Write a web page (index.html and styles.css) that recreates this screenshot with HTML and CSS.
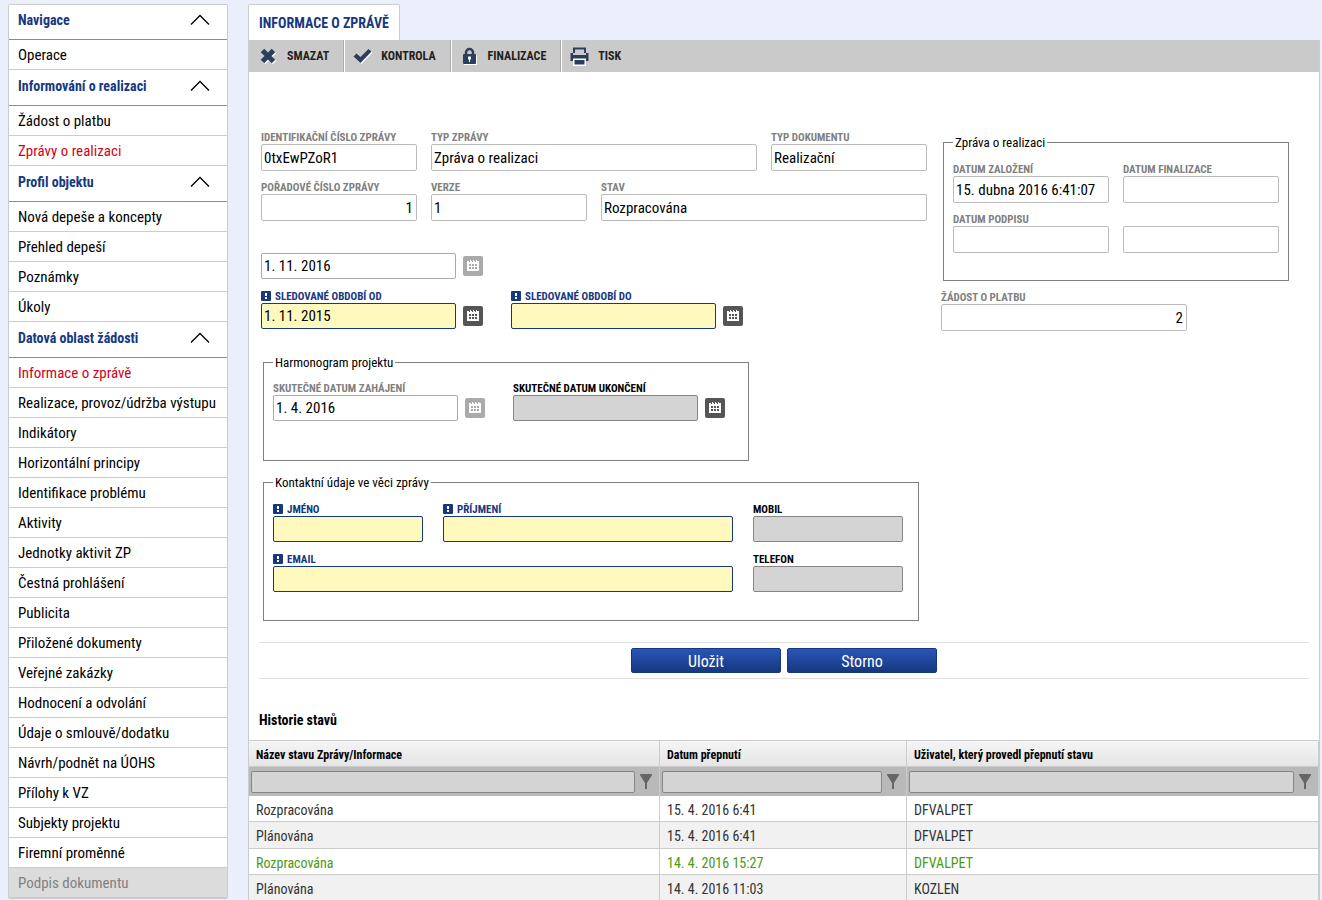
FILE: index.html
```html
<!DOCTYPE html>
<html lang="cs">
<head>
<meta charset="utf-8">
<title>Informace o zprávě</title>
<link rel="stylesheet" href="styles.css">
</head>
<body>
<svg class="sprite" aria-hidden="true">
  <symbol id="chevron" viewBox="0 0 20 12"><path d="M1 10.500 10 1.500 19 10.500" fill="none" stroke="#000" stroke-width="1.300"/></symbol>
  <symbol id="calendar" viewBox="0 0 20 20"><path fill="#fff" d="M4 5h2v1h1V4h1v1h1v1h1V4h1v1h1v1h1V4h1v1h2v10H4z"/><path fill="currentColor" d="M6 8h2v2H6zM9 8h2v2H9zM12 8h2v2h-2zM6 11h2v2H6zM9 11h2v2H9zM12 11h2v2h-2z"/></symbol>
  <symbol id="funnel" viewBox="0 0 12 15"><path fill="#666" d="M0 0h12v1L7 9v6H5V9L0 1z"/></symbol>
  <symbol id="required" viewBox="0 0 10 10"><rect width="10" height="10" rx="1" fill="#16387f"/><path fill="#fff" d="M4 2h2v3H4zM4 6h2v2H4z"/></symbol>
</svg>
<div class="page">
  <nav class="sidebar" aria-label="Navigace">
    <button class="group" type="button">Navigace<svg class="chevron"><use href="#chevron"/></svg></button>
    <a class="item" href="#">Operace</a>
    <button class="group" type="button">Informování o realizaci<svg class="chevron"><use href="#chevron"/></svg></button>
    <a class="item" href="#">Žádost o platbu</a>
    <a class="item current" href="#">Zprávy o realizaci</a>
    <button class="group" type="button">Profil objektu<svg class="chevron"><use href="#chevron"/></svg></button>
    <a class="item" href="#">Nová depeše a koncepty</a>
    <a class="item" href="#">Přehled depeší</a>
    <a class="item" href="#">Poznámky</a>
    <a class="item" href="#">Úkoly</a>
    <button class="group" type="button">Datová oblast žádosti<svg class="chevron"><use href="#chevron"/></svg></button>
    <a class="item current" href="#">Informace o zprávě</a>
    <a class="item" href="#">Realizace, provoz/údržba výstupu</a>
    <a class="item" href="#">Indikátory</a>
    <a class="item" href="#">Horizontální principy</a>
    <a class="item" href="#">Identifikace problému</a>
    <a class="item" href="#">Aktivity</a>
    <a class="item" href="#">Jednotky aktivit ZP</a>
    <a class="item" href="#">Čestná prohlášení</a>
    <a class="item" href="#">Publicita</a>
    <a class="item" href="#">Přiložené dokumenty</a>
    <a class="item" href="#">Veřejné zakázky</a>
    <a class="item" href="#">Hodnocení a odvolání</a>
    <a class="item" href="#">Údaje o smlouvě/dodatku</a>
    <a class="item" href="#">Návrh/podnět na ÚOHS</a>
    <a class="item" href="#">Přílohy k VZ</a>
    <a class="item" href="#">Subjekty projektu</a>
    <a class="item" href="#">Firemní proměnné</a>
    <a class="item disabled" href="#">Podpis dokumentu</a>
  </nav>
  <main class="main">
    <h1 class="tab">INFORMACE O ZPRÁVĚ</h1>
    <div class="panel">
      <div class="toolbar">
        <button class="tool" type="button"><svg class="tool-icon" viewBox="0 0 20 20"><path d="M3.500 4.500 14.500 15.500M14.500 4.500 3.500 15.500" stroke="#fff" stroke-width="5" transform="translate(1 1)"/><path d="M3.500 4.500 14.500 15.500M14.500 4.500 3.500 15.500" stroke="#2c3e5d" stroke-width="5"/></svg>SMAZAT</button>
        <button class="tool" type="button"><svg class="tool-icon" viewBox="0 0 20 20"><path d="M.5 10.500 3.500 7.500l4 3.500L15.500 3 18.500 5.500 7.500 17z" fill="#fff" transform="translate(1 1)"/><path d="M.5 10.500 3.500 7.500l4 3.500L15.500 3 18.500 5.500 7.500 17z" fill="#2c3e5d"/></svg>KONTROLA</button>
        <button class="tool" type="button"><svg class="tool-icon" viewBox="0 0 20 20"><path d="M4 9h13v10H4z" fill="#fff"/><path d="M6 9V6.500a3.500 3.500 0 0 1 7 0V9" fill="none" stroke="#2c3e5d" stroke-width="2.500"/><rect x="3" y="8" width="13" height="10" rx="1" fill="#2c3e5d"/><path d="M8 10.500h3v3h-1V16H9v-2.500H8z" fill="#fff"/></svg>FINALIZACE</button>
        <button class="tool" type="button"><svg class="tool-icon" viewBox="0 0 20 20"><path d="M4 7V2.500h11V7" fill="#ccc" stroke="#2c3e5d" stroke-width="2"/><path d="M.5 7h2.500v2h13V7h2.500v8h-3v-2h-12v2h-3z" fill="#2c3e5d"/><path d="M3 12.500h13V20H3z" fill="#fff"/><path d="M4.500 14h10v4.500h-10z" fill="#2c3e5d"/></svg>TISK</button>
      </div>
      <form class="form">
        <div class="columns">
          <div class="left">
            <div class="grid">
              <div class="field"><label for="f1">IDENTIFIKAČNÍ ČÍSLO ZPRÁVY</label><input id="f1" value="0txEwPZoR1" readonly></div>
              <div class="field span2"><label for="f2">TYP ZPRÁVY</label><input id="f2" value="Zpráva o realizaci" readonly></div>
              <div class="field"><label for="f3">TYP DOKUMENTU</label><input id="f3" value="Realizační" readonly></div>
              <div class="field"><label for="f4">POŘADOVÉ ČÍSLO ZPRÁVY</label><input class="number" id="f4" value="1" readonly></div>
              <div class="field"><label for="f5">VERZE</label><input id="f5" value="1" readonly></div>
              <div class="field span2"><label for="f6">STAV</label><input id="f6" value="Rozpracována" readonly></div>
            </div>
            <div class="dates first">
              <div class="date"><input class="edit" aria-label="Datum" value="1. 11. 2016" readonly><button class="cal off" type="button" aria-label="Kalendář" disabled><svg><use href="#calendar"/></svg></button></div>
            </div>
            <div class="dates">
              <div class="field required"><label for="f8"><svg class="mark"><use href="#required"/></svg>SLEDOVANÉ OBDOBÍ OD</label><div class="date"><input class="edit" id="f8" value="1. 11. 2015"><button class="cal" type="button" aria-label="Kalendář"><svg><use href="#calendar"/></svg></button></div></div>
              <div class="field required"><label for="f9"><svg class="mark"><use href="#required"/></svg>SLEDOVANÉ OBDOBÍ DO</label><div class="date"><input class="edit" id="f9"><button class="cal" type="button" aria-label="Kalendář"><svg><use href="#calendar"/></svg></button></div></div>
            </div>
            <fieldset class="schedule">
              <legend>Harmonogram projektu</legend>
              <div class="field"><label for="f10">SKUTEČNÉ DATUM ZAHÁJENÍ</label><div class="date"><input class="edit" id="f10" value="1. 4. 2016" readonly><button class="cal off" type="button" aria-label="Kalendář" disabled><svg><use href="#calendar"/></svg></button></div></div>
              <div class="field optional"><label for="f11">SKUTEČNÉ DATUM UKONČENÍ</label><div class="date"><input class="edit" id="f11"><button class="cal" type="button" aria-label="Kalendář"><svg><use href="#calendar"/></svg></button></div></div>
            </fieldset>
            <fieldset class="contact">
              <legend>Kontaktní údaje ve věci zprávy</legend>
              <div class="field required"><label for="f12"><svg class="mark"><use href="#required"/></svg>JMÉNO</label><input class="edit" id="f12"></div>
              <div class="field required"><label for="f13"><svg class="mark"><use href="#required"/></svg>PŘÍJMENÍ</label><input class="edit" id="f13"></div>
              <div class="field optional"><label for="f14">MOBIL</label><input class="edit" id="f14"></div>
              <div class="field required span2"><label for="f15"><svg class="mark"><use href="#required"/></svg>EMAIL</label><input class="edit" id="f15" type="email"></div>
              <div class="field optional"><label for="f16">TELEFON</label><input class="edit" id="f16"></div>
            </fieldset>
          </div>
          <div class="right">
            <fieldset class="report">
              <legend>Zpráva o realizaci</legend>
              <div class="field"><label for="f17">DATUM ZALOŽENÍ</label><input id="f17" value="15. dubna 2016 6:41:07" readonly></div>
              <div class="field"><label for="f18">DATUM FINALIZACE</label><input id="f18" readonly></div>
              <div class="field"><label for="f19">DATUM PODPISU</label><input id="f19" readonly></div>
              <div class="field end"><input aria-label="Podpis" readonly></div>
            </fieldset>
            <div class="field payment"><label for="f21">ŽÁDOST O PLATBU</label><input class="number" id="f21" value="2" readonly></div>
          </div>
        </div>
        <div class="actions"><button class="action" type="button">Uložit</button><button class="action" type="button">Storno</button></div>
      </form>
      <h2 class="heading">Historie stavů</h2>
      <table class="history">
        <colgroup><col class="c1"><col class="c2"><col class="c3"></colgroup>
        <thead>
          <tr><th>Název stavu Zprávy/Informace</th><th>Datum přepnutí</th><th>Uživatel, který provedl přepnutí stavu</th></tr>
          <tr class="filters">
            <td><div class="filter"><input aria-label="Filtr názvu stavu"><button type="button" aria-label="Filtrovat"><svg><use href="#funnel"/></svg></button></div></td>
            <td><div class="filter"><input aria-label="Filtr data"><button type="button" aria-label="Filtrovat"><svg><use href="#funnel"/></svg></button></div></td>
            <td><div class="filter"><input aria-label="Filtr uživatele"><button type="button" aria-label="Filtrovat"><svg><use href="#funnel"/></svg></button></div></td>
          </tr>
        </thead>
        <tbody>
          <tr><td>Rozpracována</td><td>15. 4. 2016 6:41</td><td>DFVALPET</td></tr>
          <tr><td>Plánována</td><td>15. 4. 2016 6:41</td><td>DFVALPET</td></tr>
          <tr class="active"><td>Rozpracována</td><td>14. 4. 2016 15:27</td><td>DFVALPET</td></tr>
          <tr><td>Plánována</td><td>14. 4. 2016 11:03</td><td>KOZLEN</td></tr>
        </tbody>
      </table>
    </div>
  </main>
</div>
</body>
</html>
```
FILE: styles.css
```css
* { box-sizing: border-box; }
body, button, input { font-family: "Roboto Condensed", "Liberation Sans Narrow", Roboto, sans-serif; }
body { margin: 0; background: #ebeffc; color: #000; font-size: 15px; }
button { margin: 0; padding: 0; border: 0; background: none; color: inherit; }
svg { display: block; }
.sprite { display: none; }
.page { display: flex; align-items: flex-start; gap: 20px; padding: 4px 2px 0 8px; }

.sidebar { flex: none; width: 220px; background: #fff; border: 1px solid #ccc; border-radius: 2px; }
.group, .item { display: flex; align-items: center; width: 100%; padding: 0 9px; }
.group { justify-content: space-between; height: 36px; padding: 0 17px 4px 9px; border-bottom: 1px solid #8c8c8c; color: #16387f; font-size: 14px; font-weight: 700; }
.group:first-child { height: 35px; }
.chevron { width: 20px; height: 12px; }
.item { height: 30px; border-bottom: 1px solid #ccc; color: #000; text-decoration: none; white-space: nowrap; }
.current { color: #d0021b; }
.disabled { background: #dcdcdc; color: #808080; }

.main { flex: 1; min-width: 0; }
.tab { display: flex; align-items: center; width: max-content; height: 36px; margin: 0; padding: 0 10px; background: #fff; border: 1px solid #ccc; border-bottom: 0; border-radius: 2px 2px 0 0; color: #16387f; font-size: 14px; font-weight: 700; }
.panel { background: #fff; border: 1px solid #ccc; border-bottom: 0; border-top: 0; }
.toolbar { display: flex; height: 32px; padding-left: 1px; background: #cacaca; }
.tool { display: flex; align-items: center; gap: 8px; padding: 0 14px 0 9px; margin-right: 1px; border-right: 1px solid #aaa; box-shadow: 1px 0 #fff; color: #1f1f1f; font-size: 12px; font-weight: 700; }
.tool + .tool { padding-left: 8px; }
.tool:last-child { border-right: 0; box-shadow: none; }
.tool-icon { width: 20px; height: 20px; }

.form { padding: 59px 10px 0; }
.columns { display: flex; gap: 14px; padding: 0 2px; }
.left { flex: none; width: 666px; }
.right { flex: none; width: 348px; padding-top: 3px; }
.grid { display: grid; grid-template-columns: repeat(4, 156px); gap: 10px 14px; }
.span2 { grid-column: span 2; }
.field { display: flex; flex-direction: column; min-width: 0; }
label { display: flex; gap: 4px; height: 13px; line-height: 13px; color: #808080; font-size: 11px; font-weight: 700; white-space: nowrap; }
.mark { width: 10px; height: 10px; margin-top: 1px; }
input { width: 100%; height: 27px; padding: 0 3px 0 2px; border: 1px solid #bbb; border-radius: 2px; background: #fff; color: #000; font-size: 15px; }
.number { text-align: right; }
.edit { height: 26px; border-color: #aaa; }
.required label { color: #16387f; }
.required input { background: #fff9be; border-color: #16387f; }
.optional label { color: #000; }
.optional input { background: #d4d4d4; border-color: #868686; }
.dates { display: grid; grid-template-columns: 222px 232px; gap: 28px; margin-top: 11px; }
.dates.first { margin-top: 32px; }
.date { display: flex; align-items: center; gap: 7px; }
.date input { flex: 1; min-width: 0; }
.cal { width: 20px; height: 20px; background: #555; border-radius: 2px; color: #555; }
.cal svg { width: 20px; height: 20px; }
.off { background: #aaa; color: #aaa; }

fieldset { display: grid; min-width: 0; margin: 0 0 0 2px; padding: 0 9px; border: 1px solid #808080; }
legend { height: 16px; padding: 0 2px; line-height: 18px; font-size: 13px; }
.schedule { width: 486px; margin-top: 25px; padding-top: 12px; padding-bottom: 39px; grid-template-columns: 212px 212px; gap: 28px; }
.contact { width: 656px; margin-top: 13px; padding-top: 13px; padding-bottom: 28px; grid-template-columns: 150px 290px 150px; gap: 11px 20px; }
.report { padding-top: 13px; padding-bottom: 27px; grid-template-columns: 156px 156px; gap: 10px 14px; }
.end { justify-content: flex-end; }
.payment { width: 246px; margin-top: 10px; }

.actions { display: flex; justify-content: center; gap: 6px; margin-top: 21px; padding: 5px 0; border-top: 1px solid #e2e2e2; border-bottom: 1px solid #e2e2e2; }
.action { width: 150px; height: 25px; padding-top: 1px; border: 1px solid #16387f; border-radius: 2px; background: linear-gradient(#2a55b8, #16387f); color: #fff; font-size: 16px; }
.heading { margin: 31px 10px 10px; line-height: 20px; font-size: 14px; font-weight: 700; }

.history { width: 100%; table-layout: fixed; border-collapse: separate; border-spacing: 0; border-top: 1px solid #ccc; }
.c1 { width: 411px; }
.c2 { width: 247px; }
.history th, .history td { height: 26px; padding: 2px 7px 0; border-right: 1px solid #ccc; border-bottom: 1px solid #ccc; text-align: left; }
.history th { background: linear-gradient(#f5f5f5, #e5e5e5); font-size: 12px; font-weight: 700; }
.history .filters td { height: 29px; padding: 0 2px; background: #b9b9b9; border-bottom: 0; }
.history tbody td { color: #333; font-size: 14px; }
.history tbody tr:nth-child(even) { background: #f1f1f1; }
.history tbody tr:nth-child(even) td { height: 27px; }
.history .active td { color: #4a9a12; }
.filter { display: flex; align-items: center; gap: 5px; padding-right: 5px; }
.filter input { height: 22px; background: #d4d4d4; border-color: #868686; }
.filter svg { width: 12px; height: 15px; }
```
